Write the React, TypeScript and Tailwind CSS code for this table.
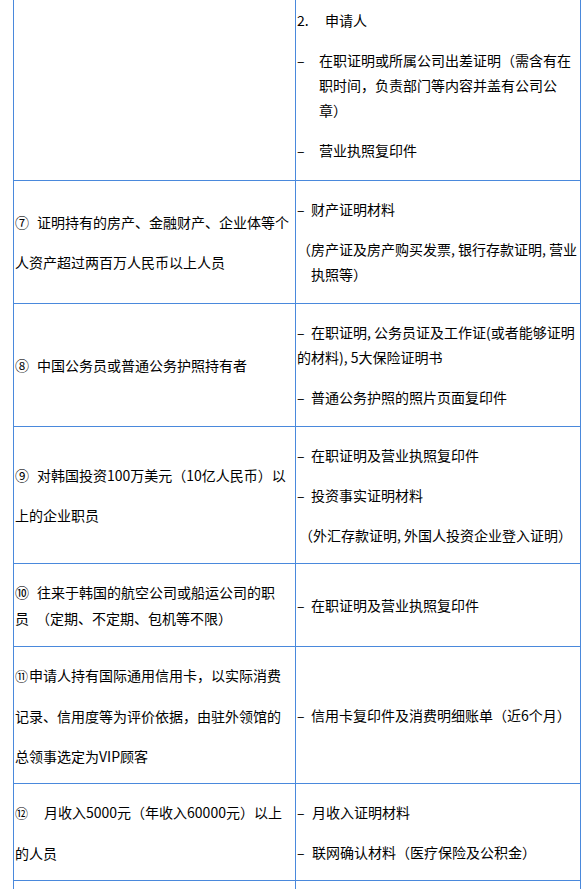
import React from "react";

const B = "border-[#4a89dc]";

function Dash({ w, children }: { w: string; children: React.ReactNode }) {
  return (
    <div className="flex leading-[25px] whitespace-nowrap">
      <span className={`${w} shrink-0`}>–</span>
      <div>{children}</div>
    </div>
  );
}

export default function App() {
  return (
    <div
      className="w-[587px] h-[889px] overflow-hidden bg-white text-black text-[14px]"
      style={{ fontFamily: '"Noto Sans CJK SC", "Noto Sans", sans-serif' }}
    >
      <div className={`ml-[13px] w-[568px] border-l ${B}`}>
        {/* Row 1 */}
        <div className={`grid grid-cols-[282px_285px] h-[181px] border-b ${B}`}>
          <div className={`border-r ${B}`}></div>
          <div className={`border-r ${B} pl-[1px] pt-[8px] flex flex-col gap-[15px]`}>
            <div className="flex leading-[25px]">
              <span className="w-[28px] shrink-0">2.</span>
              <span>申请人</span>
            </div>
            <Dash w="w-[22px]">
              在职证明或所属公司出差证明（需含有在
              <br />
              职时间，负责部门等内容并盖有公司公
              <br />
              章）
            </Dash>
            <Dash w="w-[22px]">营业执照复印件</Dash>
          </div>
        </div>

        {/* Row 7 */}
        <div className={`grid grid-cols-[282px_285px] h-[123px] border-b ${B}`}>
          <div className={`border-r ${B} pl-[1px] flex flex-col justify-center leading-[40px] whitespace-nowrap`}>
            <div>
              <span className="inline-block w-[22px]">⑦</span>证明持有的房产、金融财产、企业体等个
            </div>
            <div>人资产超过两百万人民币以上人员</div>
          </div>
          <div className={`border-r ${B} pl-[1px] flex flex-col justify-center gap-[15px]`}>
            <Dash w="w-[14px]">财产证明材料</Dash>
            <div className="leading-[25px] whitespace-nowrap">
              <div>（房产证及房产购买发票, 银行存款证明, 营业</div>
              <div className="pl-[14px]">执照等）</div>
            </div>
          </div>
        </div>

        {/* Row 8 */}
        <div className={`grid grid-cols-[282px_285px] h-[123px] border-b ${B}`}>
          <div className={`border-r ${B} pl-[1px] flex flex-col justify-center leading-[40px] whitespace-nowrap`}>
            <div>
              <span className="inline-block w-[22px]">⑧</span>中国公务员或普通公务护照持有者
            </div>
          </div>
          <div className={`border-r ${B} pl-[1px] flex flex-col justify-center gap-[15px]`}>
            <div className="leading-[25px] whitespace-nowrap">
              <div>
                <span className="inline-block w-[14px]">–</span>在职证明, 公务员证及工作证(或者能够证明
              </div>
              <div>的材料), 5大保险证明书</div>
            </div>
            <Dash w="w-[14px]">普通公务护照的照片页面复印件</Dash>
          </div>
        </div>

        {/* Row 9 */}
        <div className={`grid grid-cols-[282px_285px] h-[137px] border-b ${B}`}>
          <div className={`border-r ${B} pl-[1px] flex flex-col justify-center leading-[40px] whitespace-nowrap`}>
            <div>
              <span className="inline-block w-[22px]">⑨</span>对韩国投资100万美元（10亿人民币）以
            </div>
            <div>上的企业职员</div>
          </div>
          <div className={`border-r ${B} pl-[1px] flex flex-col justify-center gap-[15px]`}>
            <Dash w="w-[14px]">在职证明及营业执照复印件</Dash>
            <Dash w="w-[14px]">投资事实证明材料</Dash>
            <div className="leading-[25px] whitespace-nowrap pl-[2px]">
              （外汇存款证明, 外国人投资企业登入证明）
            </div>
          </div>
        </div>

        {/* Row 10 */}
        <div className={`grid grid-cols-[282px_285px] h-[83px] border-b ${B}`}>
          <div className={`border-r ${B} pl-[1px] flex flex-col justify-center leading-[26px] whitespace-nowrap`}>
            <div>
              <span className="inline-block w-[22px]">⑩</span>往来于韩国的航空公司或船运公司的职
            </div>
            <div>
              员<span className="ml-[7px]">（定期、不定期、包机等不限）</span>
            </div>
          </div>
          <div className={`border-r ${B} pl-[1px] flex flex-col justify-center gap-[15px]`}>
            <Dash w="w-[14px]">在职证明及营业执照复印件</Dash>
          </div>
        </div>

        {/* Row 11 */}
        <div className={`grid grid-cols-[282px_285px] h-[137px] border-b ${B}`}>
          <div className={`border-r ${B} pl-[1px] flex flex-col justify-center leading-[40px] whitespace-nowrap`}>
            <div>
              <span className="inline-block w-[14px] text-[13px]">⑪</span>申请人持有国际通用信用卡，以实际消费
            </div>
            <div>记录、信用度等为评价依据，由驻外领馆的</div>
            <div>总领事选定为VIP顾客</div>
          </div>
          <div className={`border-r ${B} pl-[1px] flex flex-col justify-center gap-[15px]`}>
            <Dash w="w-[14px]">信用卡复印件及消费明细账单（近6个月）</Dash>
          </div>
        </div>

        {/* Row 12 */}
        <div className={`grid grid-cols-[282px_285px] h-[97px] border-b ${B}`}>
          <div className={`border-r ${B} pl-[1px] flex flex-col justify-center leading-[40px] whitespace-nowrap`}>
            <div>
              <span className="inline-block w-[29px] text-[13px]">⑫</span>月收入5000元（年收入60000元）以上
            </div>
            <div>的人员</div>
          </div>
          <div className={`border-r ${B} pl-[1px] flex flex-col justify-center gap-[15px]`}>
            <Dash w="w-[15px]">月收入证明材料</Dash>
            <Dash w="w-[15px]">联网确认材料（医疗保险及公积金）</Dash>
          </div>
        </div>

        {/* Next row (cut off) */}
        <div className="grid grid-cols-[282px_285px] h-[30px]">
          <div className={`border-r ${B}`}></div>
          <div className={`border-r ${B}`}></div>
        </div>
      </div>
    </div>
  );
}
